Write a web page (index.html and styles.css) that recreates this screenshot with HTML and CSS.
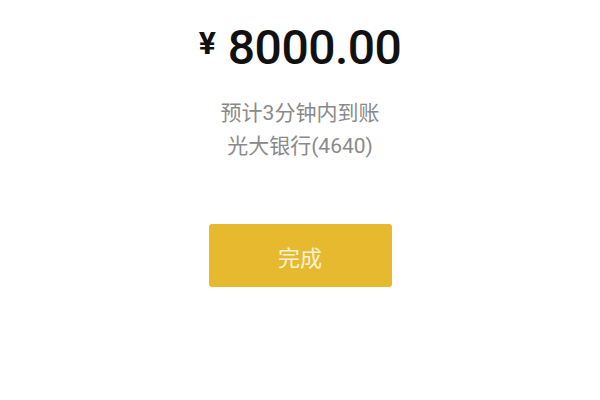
FILE: index.html
```html
<!DOCTYPE html>
<html lang="zh-CN">
<head>
  <meta charset="UTF-8" />
  <meta name="viewport" content="width=device-width, initial-scale=1.0"/>
  <title>提现成功</title>
  <link rel="stylesheet" href="styles.css">
</head>
<body>

  <div class="result">
    <div class="amount">
      <span class="yen">¥</span>
      <span class="num">8000.00</span>
    </div>
    <div class="info">
      <p>预计3分钟内到账</p>
      <p>光大银行(4640)</p>
    </div>
    <button class="done-btn">完成</button>
  </div>

</body>
</html>
```

FILE: styles.css
```css
* { box-sizing: border-box; margin: 0; padding: 0; }

html, body {
  height: 100%;
  background-color: #fff;
  font-family: Roboto, "Noto Sans CJK SC", sans-serif;
  color: #111;
}

.result {
  display: flex;
  flex-direction: column;
  align-items: center;
  padding-top: 20px;
}

.amount {
  display: flex;
  align-items: flex-start;
  height: 56px;
}

.yen {
  font-family: Roboto, sans-serif;
  font-size: 32px;
  font-weight: 700;
  line-height: 1;
  margin-top: 7px;
  margin-right: 12px;
}

.num {
  font-size: 48px;
  font-weight: 500;
  line-height: 56px;
  letter-spacing: -0.5px;
}

.info {
  margin-top: 21px;
  text-align: center;
  color: #8a8a8a;
  font-size: 21px;
  line-height: 33px;
}

.done-btn {
  margin-top: 61px;
  width: 183px;
  height: 63px;
  border: none;
  border-radius: 3px;
  background-color: #e6b92e;
  color: #fbf3d8;
  font-family: inherit;
  font-size: 22px;
  cursor: pointer;
}
```
